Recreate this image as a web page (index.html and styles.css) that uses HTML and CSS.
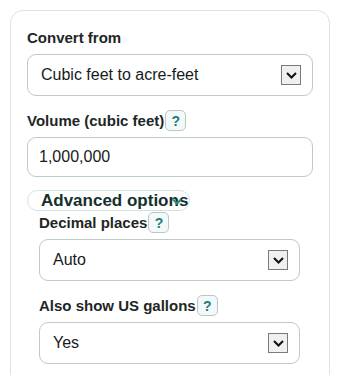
FILE: index.html
```html
<!DOCTYPE html>
<html>
<head>
<meta charset="utf-8">
<link rel="stylesheet" href="styles.css">
</head>
<body>
<div class="card">
  <div class="row"><span class="label">Convert from</span></div>
  <div class="control select">
    <span class="value">Cubic feet to acre-feet</span>
    <span class="arrow"><svg width="11" height="7" viewBox="0 0 11 7"><path d="M1 1 L5.5 5.5 L10 1" fill="none" stroke="#111" stroke-width="2"/></svg></span>
  </div>

  <div class="row gap-top"><span class="label">Volume (cubic feet)</span><span class="help">?</span></div>
  <div class="control input"><span class="value">1,000,000</span></div>

  <div class="pill"><span class="pill-text">Advanced options</span>
    <svg class="chev" width="10" height="8" viewBox="0 0 10 8"><path d="M1 1.5 L5 5.5 L9 1.5" fill="none" stroke="#2b8c72" stroke-width="2"/></svg>
  </div>

  <div class="advanced">
    <div class="row tight"><span class="label">Decimal places</span><span class="help">?</span></div>
    <div class="control select">
      <span class="value">Auto</span>
      <span class="arrow"><svg width="11" height="7" viewBox="0 0 11 7"><path d="M1 1 L5.5 5.5 L10 1" fill="none" stroke="#111" stroke-width="2"/></svg></span>
    </div>

    <div class="row gap-top"><span class="label">Also show US gallons</span><span class="help">?</span></div>
    <div class="control select">
      <span class="value">Yes</span>
      <span class="arrow"><svg width="11" height="7" viewBox="0 0 11 7"><path d="M1 1 L5.5 5.5 L10 1" fill="none" stroke="#111" stroke-width="2"/></svg></span>
    </div>
  </div>
</div>
</body>
</html>
```
FILE: styles.css
```css
html, body {
  margin: 0;
  padding: 0;
  background: #ffffff;
  font-family: "Liberation Sans", Arial, sans-serif;
  color: #1c2424;
}
.card {
  margin: 10px 0 0 10px;
  width: 320px;
  height: 400px;
  box-sizing: border-box;
  border: 1px solid #dce3e1;
  border-radius: 13px;
  padding: 16px 16px 0 16px;
}
.row {
  display: flex;
  align-items: center;
  height: 21px;
  margin-bottom: 6px;
}
.row.gap-top {
  margin-top: 14px;
}
.row.tight {
  margin-top: 1px;
}
.label {
  font-size: 15px;
  font-weight: bold;
  line-height: 20px;
  color: #1e2626;
}
.help {
  margin-left: 1px;
  width: 19px;
  height: 19px;
  border: 1px solid #b7c8c4;
  border-radius: 5px;
  background: #f3f8f8;
  color: #1d7c76;
  font-weight: bold;
  font-size: 14px;
  display: flex;
  align-items: center;
  justify-content: center;
}
.control {
  box-sizing: border-box;
  border: 1px solid #bccbc7;
  border-radius: 9px;
  display: flex;
  align-items: center;
  justify-content: space-between;
  background: #fff;
}
.select {
  height: 42px;
  padding: 0 11px 0 13px;
}
.input {
  height: 40px;
  padding: 0 11px;
}
.value {
  font-size: 16px;
  color: #161b1b;
}
.arrow {
  width: 18px;
  height: 18px;
  border: 1px solid #7a7a7a;
  background: #f0f0f0;
  display: flex;
  align-items: center;
  justify-content: center;
}
.pill {
  position: relative;
  margin-top: 13px;
  width: 163px;
  height: 21px;
  box-sizing: border-box;
  border: 1px solid #d3e2de;
  border-radius: 11px;
  padding-left: 13px;
  display: flex;
  align-items: center;
}
.pill-text {
  font-size: 17px;
  font-weight: bold;
  color: #14302c;
  line-height: 19px;
}
.chev {
  position: absolute;
  left: 144px;
  top: 7px;
}
.advanced {
  padding-left: 12px;
  padding-right: 13px;
}
```
